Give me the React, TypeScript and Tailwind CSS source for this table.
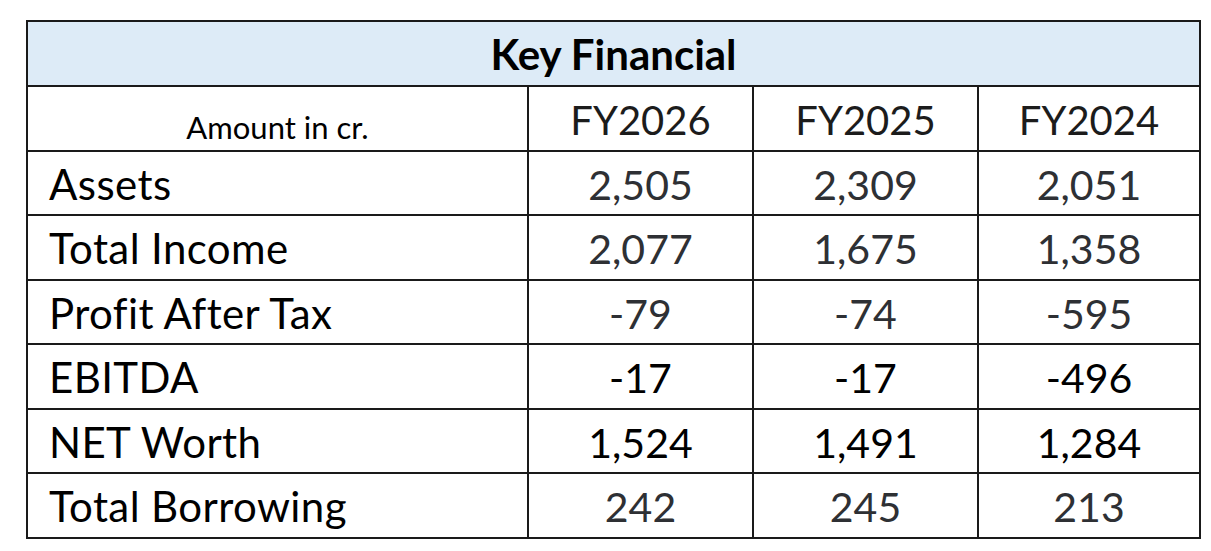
const rows: { label: string; values: string[]; dark?: boolean }[] = [
  { label: 'Assets', values: ['2,505', '2,309', '2,051'] },
  { label: 'Total Income', values: ['2,077', '1,675', '1,358'] },
  { label: 'Profit After Tax', values: ['-79', '-74', '-595'] },
  { label: 'EBITDA', values: ['-17', '-17', '-496'], dark: true },
  { label: 'NET Worth', values: ['1,524', '1,491', '1,284'], dark: true },
  { label: 'Total Borrowing', values: ['242', '245', '213'] },
];

export default function App() {
  return (
    <div className="min-h-screen bg-white pt-[20px] pl-[26px] font-['Lato',sans-serif]">
      <div className="grid w-[1175px] grid-cols-[499px_223px_223px_1fr] gap-[2px] border-2 border-[#1a1a1a] bg-[#1a1a1a]">
        {/* Title */}
        <div className="col-span-4 flex h-[63px] items-center justify-center bg-[#ddebf7] pt-[2px] text-[42px] font-bold text-black">
          Key Financial
        </div>

        {/* Column headers */}
        <div className="flex h-[62.5px] items-end justify-center bg-white pb-[3px] text-[31px] leading-[1.2] text-black">
          Amount in cr.
        </div>
        {['FY2026', 'FY2025', 'FY2024'].map((y) => (
          <div key={y} className="flex h-[62.5px] items-center justify-center bg-white pt-[3px] text-[40px] text-[#1c1c1c]">
            {y}
          </div>
        ))}

        {/* Data rows */}
        {rows.map((r) => (
          <div key={r.label} className="contents">
            <div className="flex h-[62.5px] items-center bg-white pl-[21px] pt-[3px] text-[42px] tracking-[0.4px] text-black">
              {r.label}
            </div>
            {r.values.map((v, i) => (
              <div
                key={i}
                className={`flex h-[62.5px] items-center justify-center bg-white pt-[3px] text-[41px] ${
                  r.dark ? 'text-black' : 'text-[#2e3034]'
                }`}
              >
                {v}
              </div>
            ))}
          </div>
        ))}
      </div>
    </div>
  );
}
